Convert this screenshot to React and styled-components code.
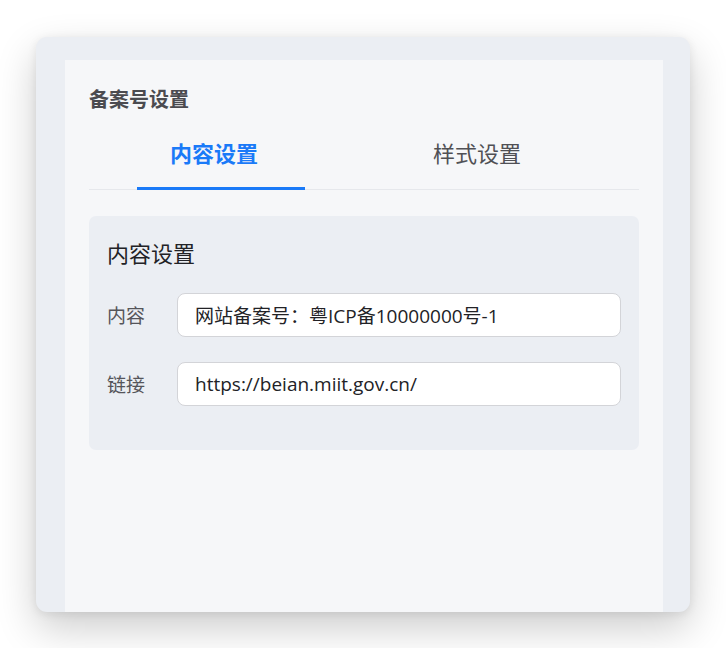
import React from "react";
import styled, { createGlobalStyle } from "styled-components";

const Global = createGlobalStyle`
  html, body {
    margin: 0;
    background: #ffffff;
    min-height: 100vh;
  }
  body {
    font-family: "Open Sans", "Noto Sans CJK SC", sans-serif;
  }
`;

const Window = styled.div`
  margin: 37px 36px 0;
  width: 654px;
  height: 575px;
  border-radius: 11px;
  background: #ebeef3;
  box-shadow: 0 16px 40px rgba(0, 0, 0, 0.2), 0 2px 10px rgba(0, 0, 0, 0.08);
  display: flex;
  overflow: hidden;
`;

const Panel = styled.div`
  margin: 23px 27px 0 29px;
  flex: 1;
  background: #f6f7f9;
  padding: 25px 24px 0;
`;

const Title = styled.div`
  font-size: 20px;
  line-height: 30px;
  font-weight: 700;
  color: #4b4b50;
`;

const TabBar = styled.div`
  display: flex;
  gap: 95px;
  margin-top: 22px;
  padding-left: 48px;
  border-bottom: 1px solid #e6e8ec;
`;

const Tab = styled.div`
  width: 168px;
  box-sizing: border-box;
  padding: 0 0 17px 33px;
  margin-bottom: -1px;
  font-size: 22px;
  line-height: 33px;
  color: ${(p) => (p.$active ? "#1a7af8" : "#505055")};
  font-weight: ${(p) => (p.$active ? 600 : 400)};
  border-bottom: 3px solid ${(p) => (p.$active ? "#1a7af8" : "transparent")};
  cursor: pointer;
`;

const Card = styled.div`
  margin-top: 26px;
  background: #ebeef3;
  border-radius: 7px;
  padding: 21px 18px 44px;
`;

const CardTitle = styled.div`
  font-size: 22px;
  line-height: 33px;
  color: #222226;
  margin-bottom: 23px;
`;

const Row = styled.div`
  display: flex;
  align-items: center;
  & + & {
    margin-top: 25px;
  }
`;

const Label = styled.div`
  width: 70px;
  font-size: 19px;
  color: #55555a;
`;

const Input = styled.input`
  flex: 1;
  height: 44px;
  box-sizing: border-box;
  border: 1px solid #d3d4d8;
  border-radius: 8px;
  background: #ffffff;
  padding: 0 17px;
  font-family: inherit;
  font-size: 19px;
  color: #222226;
  outline: none;
`;

const fields = [
  { label: "内容", value: "网站备案号：粤ICP备10000000号-1" },
  { label: "链接", value: "https://beian.miit.gov.cn/" },
];

export default function App() {
  return (
    <>
      <Global />
      <Window>
        <Panel>
          <Title>备案号设置</Title>
          <TabBar>
            <Tab $active>内容设置</Tab>
            <Tab>样式设置</Tab>
          </TabBar>
          <Card>
            <CardTitle>内容设置</CardTitle>
            {fields.map((f) => (
              <Row key={f.label}>
                <Label>{f.label}</Label>
                <Input defaultValue={f.value} />
              </Row>
            ))}
          </Card>
        </Panel>
      </Window>
    </>
  );
}
